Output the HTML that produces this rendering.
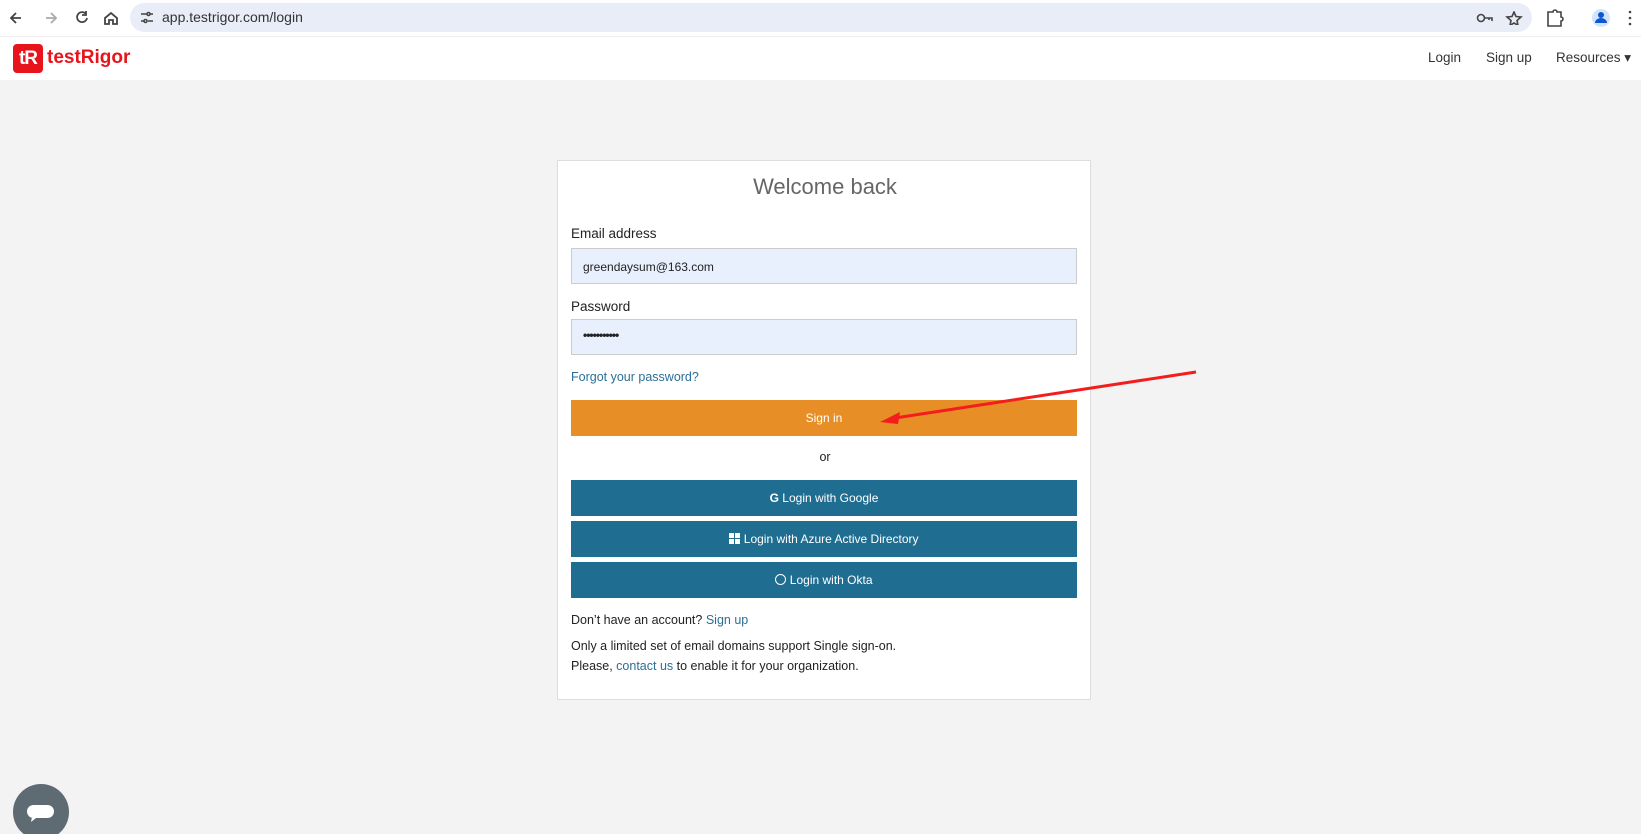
<!DOCTYPE html>
<html><head><meta charset="utf-8"><style>
*{box-sizing:border-box;margin:0;padding:0}
body{width:1641px;height:834px;overflow:hidden;background:#f3f3f3;font-family:"Liberation Sans",sans-serif;position:relative;color:#222}
.chrome{position:absolute;left:0;top:0;width:1641px;height:36px;background:#fff}
.url{position:absolute;left:130px;top:3px;width:1402px;height:29px;border-radius:15px;background:#e9edf7}
.url span{position:absolute;left:32px;top:6px;font-size:14px;color:#333}
.nav{position:absolute;left:0;top:36px;width:1641px;height:44px;background:#fff;border-top:1px solid #eee}
.abs{position:absolute}
.card{position:absolute;left:557px;top:160px;width:534px;height:540px;background:#fff;border:1px solid #ddd}
.lbl{position:absolute;left:13px;font-size:13.5px;color:#222}
.inp{position:absolute;left:13px;width:506px;height:36px;background:#e8f0fe;border:1px solid #ccc;font-size:12px;padding:11px 11px;color:#222}
.btn{position:absolute;left:13px;width:506px;height:36px;color:#fff;font-size:12px;text-align:center;line-height:36px}
.blue{background:#1f6e91}
a{color:#2a6f97;text-decoration:none}
.t{position:absolute;left:13px;font-size:12.5px;color:#222}
</style></head><body>
<div class="chrome">
<svg class="abs" style="left:8px;top:9px" width="110" height="18" fill="none" stroke="#444" stroke-width="1.8">
<path d="M13 9H3M8 4L3 9l5 5"/><path d="M38 9h10M43 4l5 5-5 5" stroke="#aaa"/>
<path d="M78 5a5 5 0 1 0 1 4M78 2v4h-4"/><path d="M97 9l6-5 6 5v6h-4v-4h-4v4h-4z"/></svg>
<div class="url"><svg class="abs" style="left:10px;top:8px" width="14" height="13" fill="none" stroke="#444" stroke-width="1.6"><path d="M1 3h6M10 3h3M1 10h3M8 10h5"/><circle cx="8.5" cy="3" r="1.5"/><circle cx="5.5" cy="10" r="1.5"/></svg><span>app.testrigor.com/login</span>
<svg class="abs" style="left:1346px;top:8px" width="48" height="14" fill="none" stroke="#444" stroke-width="1.6"><circle cx="5" cy="7" r="3.5"/><path d="M9 7h7v3M13 7v2"/><path d="M38 1l2 4.5 5 .5-4 3.5 1 5-4-2.5-4 2.5 1-5-4-3.5 5-.5z"/></svg></div>
<svg class="abs" style="left:1545px;top:7px" width="96" height="22" fill="none" stroke="#444" stroke-width="1.6"><path d="M3 5h5a2 2 0 0 1 4 0h4v5a2 2 0 0 1 0 4v5H3z"/><circle cx="56" cy="11" r="9" fill="#d3e3fd" stroke="none"/><circle cx="56" cy="8" r="3" fill="#0b57d0" stroke="none"/><path d="M50 16a6 5 0 0 1 12 0z" fill="#0b57d0" stroke="none"/><circle cx="85" cy="5" r="1.3" fill="#444" stroke="none"/><circle cx="85" cy="11" r="1.3" fill="#444" stroke="none"/><circle cx="85" cy="17" r="1.3" fill="#444" stroke="none"/></svg>
</div>
<div class="nav">
<div class="abs" style="left:13px;top:7px;width:30px;height:29px;background:#e8141b;border-radius:4px;color:#fff;font-weight:bold;font-size:19px;line-height:29px;text-align:center;letter-spacing:-1px">tR</div>
<div class="abs" style="left:47px;top:10px;color:#e8141b;font-weight:bold;font-size:19px">testRigor</div>
<div class="abs" style="left:1428px;top:13px;font-size:13.5px;color:#333">Login</div>
<div class="abs" style="left:1486px;top:13px;font-size:13.5px;color:#333">Sign up</div>
<div class="abs" style="left:1556px;top:13px;font-size:13.5px;color:#333">Resources ▾</div>
</div>
<div class="card">
<div class="abs" style="left:0;width:534px;top:13px;text-align:center;font-size:22px;color:#666">Welcome back</div>
<div class="lbl" style="top:65px">Email address</div>
<div class="inp" style="top:87px">greendaysum@163.com</div>
<div class="lbl" style="top:138px">Password</div>
<div class="inp" style="top:158px;font-weight:bold;letter-spacing:-1px;padding-top:8px">•••••••••••</div>
<div class="t" style="top:209px"><a>Forgot your password?</a></div>
<div class="btn" style="top:239px;background:#e88e26">Sign in</div>
<div class="abs" style="left:0;width:534px;top:289px;text-align:center;font-size:12.5px">or</div>
<div class="btn blue" style="top:319px"><b>G</b> Login with Google</div>
<div class="btn blue" style="top:360px"><span style="display:inline-block;width:11px;height:11px;background:linear-gradient(#1f6e91,#1f6e91) center/1px 11px no-repeat,linear-gradient(#1f6e91,#1f6e91) center/11px 1px no-repeat,#fff;vertical-align:-1px"></span> Login with Azure Active Directory</div>
<div class="btn blue" style="top:401px"><span style="display:inline-block;width:11px;height:11px;border:1.5px solid #fff;border-radius:50%;vertical-align:-1px"></span> Login with Okta</div>
<div class="t" style="top:452px">Don’t have an account? <a>Sign up</a></div>
<div class="t" style="top:478px">Only a limited set of email domains support Single sign-on.</div>
<div class="t" style="top:498px">Please, <a>contact us</a> to enable it for your organization.</div>
</div>
<svg class="abs" style="left:0;top:0" width="1641" height="834"><path d="M1196 372L895 418" stroke="#f41d1d" stroke-width="3"/><path d="M880 422l20-10-2 12z" fill="#f41d1d"/>
<circle cx="41" cy="812" r="28" fill="#5f6b73"/><rect x="27" y="805" width="27" height="13" rx="6.5" fill="#fff"/><path d="M32 817l-1 5 5-4z" fill="#fff"/></svg>
</body></html>
